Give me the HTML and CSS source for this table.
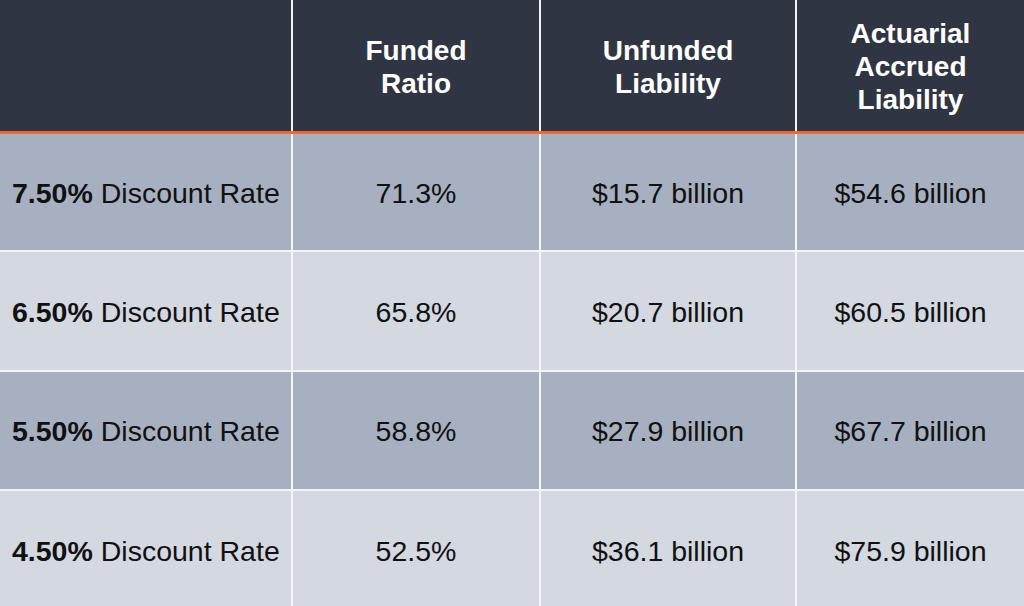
FILE: index.html
```html
<!DOCTYPE html>
<html>
<head>
<meta charset="utf-8">
<link rel="stylesheet" href="styles.css">
</head>
<body>
<div class="table">
  <div class="cell head"></div>
  <div class="cell head">Funded<br>Ratio</div>
  <div class="cell head">Unfunded<br>Liability</div>
  <div class="cell head">Actuarial<br>Accrued<br>Liability</div>
  <div class="rule"></div>

  <div class="cell label dark first"><b>7.50%</b>&nbsp;Discount Rate</div>
  <div class="cell dark first">71.3%</div>
  <div class="cell dark first">$15.7 billion</div>
  <div class="cell dark first">$54.6 billion</div>

  <div class="cell label light"><b>6.50%</b>&nbsp;Discount Rate</div>
  <div class="cell light">65.8%</div>
  <div class="cell light">$20.7 billion</div>
  <div class="cell light">$60.5 billion</div>

  <div class="cell label dark"><b>5.50%</b>&nbsp;Discount Rate</div>
  <div class="cell dark">58.8%</div>
  <div class="cell dark">$27.9 billion</div>
  <div class="cell dark">$67.7 billion</div>

  <div class="cell label light last"><b>4.50%</b>&nbsp;Discount Rate</div>
  <div class="cell light last">52.5%</div>
  <div class="cell light last">$36.1 billion</div>
  <div class="cell light last">$75.9 billion</div>
</div>
</body>
</html>
```
FILE: styles.css
```css
html, body {
  margin: 0;
  padding: 0;
  background: #ffffff;
}
body {
  width: 1024px;
  height: 606px;
  overflow: hidden;
  font-family: "Liberation Sans", Arial, sans-serif;
}
.table {
  display: grid;
  grid-template-columns: 291px 246px 254px 1fr;
  grid-template-rows: 131px 3px 116px 120px 119px 117px;
  column-gap: 2px;
  background: #f4f5f8;
  width: 1024px;
  height: 606px;
}
.rule {
  grid-column: 1 / -1;
  background: #ea6a36;
}
.cell {
  display: flex;
  align-items: center;
  justify-content: center;
  text-align: center;
  font-size: 28.5px;
  color: #111111;
  box-sizing: border-box;
  border-top: 2px solid #f4f5f8;
  padding-top: 2px;
}
.cell.first {
  border-top: 0;
  padding-top: 2px;
}
.cell.last {
  padding-top: 6px;
}
.head {
  background: #2f3542;
  color: #ffffff;
  font-weight: bold;
  font-size: 28px;
  line-height: 33px;
  border-top: 0;
  padding-top: 2px;
}
.dark {
  background: #a6b0c0;
}
.light {
  background: #d3d8e1;
}
.label {
  justify-content: flex-start;
  padding-left: 12px;
}
.label b {
  font-weight: bold;
}
```
